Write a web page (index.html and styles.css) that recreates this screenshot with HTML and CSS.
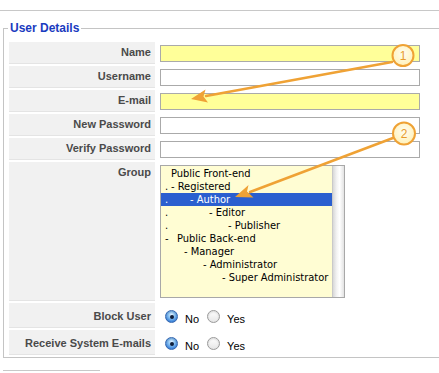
FILE: index.html
```html
<!DOCTYPE html>
<html>
<head>
<meta charset="utf-8">
<title>User Details</title>
<link rel="stylesheet" href="styles.css">
</head>
<body>
<div class="topline"></div>
<fieldset class="details">
  <legend class="legend">User Details</legend>
  <div class="form">
    <div class="label">Name</div>
    <div class="value"><input class="field hl" type="text"></div>

    <div class="label">Username</div>
    <div class="value"><input class="field" type="text"></div>

    <div class="label">E-mail</div>
    <div class="value"><input class="field hl" type="text"></div>

    <div class="label">New Password</div>
    <div class="value"><input class="field" type="password"></div>

    <div class="label">Verify Password</div>
    <div class="value"><input class="field" type="password"></div>

    <div class="label label-top">Group</div>
    <div class="value value-top">
      <div class="listbox" role="listbox">
        <div class="options">
          <div class="opt"><span class="lead"></span><span class="txt">Public Front-end</span></div>
          <div class="opt"><span class="lead">.</span><span class="txt">- Registered</span></div>
          <div class="opt sel"><span class="lead">.</span><span class="txt i19">- Author</span></div>
          <div class="opt"><span class="lead">.</span><span class="txt i38">- Editor</span></div>
          <div class="opt"><span class="lead">.</span><span class="txt i57">- Publisher</span></div>
          <div class="opt"><span class="lead">-</span><span class="txt i6">Public Back-end</span></div>
          <div class="opt"><span class="lead"></span><span class="txt i13">- Manager</span></div>
          <div class="opt"><span class="lead"></span><span class="txt i32">- Administrator</span></div>
          <div class="opt"><span class="lead"></span><span class="txt i51">- Super Administrator</span></div>
        </div>
        <div class="scroll"></div>
      </div>
    </div>

    <div class="label tall">Block User</div>
    <div class="value tall">
      <span class="radio on"></span><span class="rtext">No</span>
      <span class="radio"></span><span class="rtext">Yes</span>
    </div>

    <div class="label tall">Receive System E-mails</div>
    <div class="value tall">
      <span class="radio on"></span><span class="rtext">No</span>
      <span class="radio"></span><span class="rtext">Yes</span>
    </div>
  </div>
</fieldset>
<div class="bottomline"></div>

<svg class="notes" width="439" height="373" viewBox="0 0 439 373">
  <g stroke="#efa235" stroke-width="2.5" stroke-linecap="round" fill="none">
    <line x1="392" y1="62" x2="206" y2="96"/>
    <line x1="393" y1="138" x2="250" y2="192"/>
  </g>
  <g fill="#efa235">
    <polygon points="191,99 205.5,89.5 203.5,96.5 208,102.5"/>
    <polygon points="235,197 248.5,185 247,191.5 253.5,197.5"/>
  </g>
  <defs>
    <radialGradient id="cf" cx="50%" cy="40%" r="60%">
      <stop offset="0" stop-color="#fffdf0"/>
      <stop offset="1" stop-color="#fff1b8"/>
    </radialGradient>
  </defs>
  <circle cx="403" cy="55.5" r="10.5" fill="url(#cf)" stroke="#efa235" stroke-width="2"/>
  <circle cx="404" cy="133.5" r="11" fill="url(#cf)" stroke="#efa235" stroke-width="2"/>
  <text x="403" y="60" class="num">1</text>
  <text x="404" y="138" class="num">2</text>
</svg>
</body>
</html>
```

FILE: styles.css
```css
html, body {
  margin: 0;
  padding: 0;
  background: #fff;
  overflow: hidden;
}
body {
  width: 439px;
  height: 373px;
  position: relative;
  font-family: "Liberation Sans", Arial, sans-serif;
}
.topline {
  margin-top: 10px;
  border-top: 1px solid #c8c8c8;
  width: 439px;
}
.details {
  margin: 9px 0 0 3px;
  width: 470px;
  border: 1px solid #c4c4c4;
  padding: 6px 0 2px 5px;
  min-width: 0;
  box-sizing: border-box;
}
.legend {
  font-family: "Liberation Sans", Arial, sans-serif;
  font-weight: bold;
  font-size: 12px;
  line-height: 16px;
  color: #1a3bbf;
  padding: 0 2px;
  margin-left: -1px;
}
.form {
  display: grid;
  grid-template-columns: 146px 1fr;
  grid-template-rows: 22px 22px 22px 22px 22px 139px 25px 25px;
  row-gap: 2px;
  column-gap: 5px;
}
.label {
  background: #f1f1f1;
  border-bottom: 1px solid #e4e4e4;
  box-sizing: border-box;
  text-align: right;
  padding-right: 4px;
  font-weight: bold;
  font-size: 11px;
  line-height: 21px;
  color: #4a4a4a;
  white-space: nowrap;
}
.value {
  display: flex;
  align-items: center;
}
.field {
  box-sizing: border-box;
  width: 260px;
  height: 17px;
  margin: 0;
  padding: 0;
  border: 1px solid #aaa;
  background: #fff;
  outline: none;
}
.field.hl {
  background: #ffff99;
}
.label-top {
  line-height: 14px;
  padding-top: 3px;
}
.value-top {
  align-items: flex-start;
  padding-top: 3px;
  box-sizing: border-box;
}
.listbox {
  box-sizing: border-box;
  width: 185px;
  height: 133px;
  border: 1px solid #a8a8a8;
  background: #fffdd3;
  display: flex;
  font-family: "DejaVu Sans", sans-serif;
  font-stretch: condensed;
  font-size: 11px;
  color: #000;
}
.options {
  flex: 1;
  padding-top: 1px;
}
.opt {
  height: 13px;
  line-height: 13px;
  padding-left: 4px;
  display: flex;
  white-space: pre;
}
.opt.sel {
  background: #2b5fcf;
  color: #fff;
}
.lead {
  width: 6px;
  flex: none;
}
.i6 { margin-left: 6px; }
.i13 { margin-left: 13px; }
.i19 { margin-left: 19px; }
.i32 { margin-left: 32px; }
.i38 { margin-left: 38px; }
.i51 { margin-left: 51px; }
.i57 { margin-left: 57px; }
.scroll {
  width: 11px;
  flex: none;
  border-left: 1px solid #c9c9c9;
  background: linear-gradient(to right, #d8d8d8, #f4f4f4 35%, #ffffff 60%, #e2e2e2);
}
.label.tall {
  line-height: 22px;
  padding-top: 2px;
}
.value.tall {
  padding-left: 5px;
  padding-top: 2px;
  box-sizing: border-box;
}
.radio {
  box-sizing: border-box;
  width: 13px;
  height: 13px;
  border-radius: 50%;
  border: 1px solid #9a9a9a;
  background: linear-gradient(#ffffff, #e6e6e6);
  box-shadow: inset 0 1px 2px rgba(0,0,0,0.15);
  flex: none;
  position: relative;
}
.radio.on {
  border-color: #3567b0;
  background: radial-gradient(circle at 50% 35%, #e6f4ff 0, #8cc4f4 35%, #3f86dc 75%, #2c64b8 100%);
}
.radio.on::after {
  content: "";
  position: absolute;
  left: 3.5px;
  top: 3.5px;
  width: 4px;
  height: 4px;
  border-radius: 50%;
  background: #0f1e3a;
}
.rtext {
  font-size: 11px;
  color: #000;
  margin: 4px 8px 0 7px;
  line-height: 14px;
}
.bottomline {
  margin: 12px 0 0 3px;
  width: 97px;
  border-top: 1px solid #c8c8c8;
}
.notes {
  position: absolute;
  left: 0;
  top: 0;
  pointer-events: none;
}
.num {
  font-family: "Liberation Sans", Arial, sans-serif;
  font-size: 12px;
  fill: #e89a2c;
  text-anchor: middle;
}
```
